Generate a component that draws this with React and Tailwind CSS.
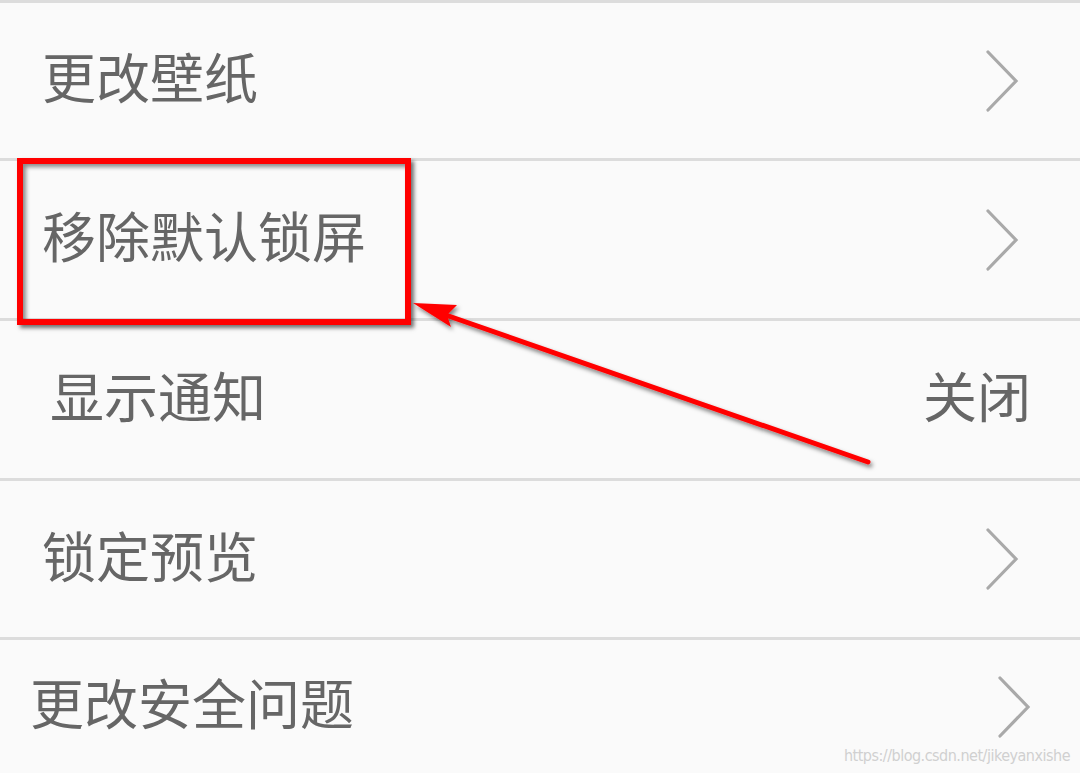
import React from "react";

const rows = [
  { label: "更改壁纸", h: "h-[158px]", pl: "pl-[42px]", pr: "pr-[61px]", arrow: true },
  { label: "移除默认锁屏", h: "h-[160px]", pl: "pl-[42px]", pr: "pr-[61px]", arrow: true },
  { label: "显示通知", h: "h-[160px]", pl: "pl-[50px]", pr: "pr-[49px]", value: "关闭" },
  { label: "锁定预览", h: "h-[159px]", pl: "pl-[42px]", pr: "pr-[61px]", arrow: true },
  { label: "更改安全问题", h: "h-[136px]", pl: "pl-[30px]", pr: "pr-[49px]", arrow: true },
];

function Chevron() {
  return (
    <svg width="34" height="64" viewBox="0 0 34 64" fill="none">
      <polyline
        points="3,3 31,32 3,61"
        stroke="#a9a9a9"
        strokeWidth="3.2"
        strokeLinecap="round"
        strokeLinejoin="miter"
      />
    </svg>
  );
}

export default function App() {
  return (
    <div
      className="relative w-[1080px] h-[773px] overflow-hidden bg-[#fafafa]"
      style={{ fontFamily: '"Noto Sans CJK SC", "Noto Sans", sans-serif' }}
    >
      <div className="flex flex-col">
        {rows.map((row) => (
          <div
            key={row.label}
            className={`flex items-center justify-between border-t-[3px] border-[#dcdcdc] ${row.h} ${row.pl} ${row.pr}`}
          >
            <span className="mb-[9px] text-[54px] leading-none text-[#666666]">
              {row.label}
            </span>
            {row.arrow && <Chevron />}
            {row.value && (
              <span className="mb-[9px] text-[54px] leading-none text-[#666666]">
                {row.value}
              </span>
            )}
          </div>
        ))}
      </div>

      {/* annotation: red box */}
      <div className="absolute left-[17px] top-[158px] w-[394px] h-[167px] border-[6px] border-[#ff0000] shadow-[3px_3px_4px_rgba(0,0,0,0.55),inset_3px_3px_4px_rgba(0,0,0,0.45)]" />

      {/* annotation: arrow */}
      <svg
        className="absolute left-0 top-0"
        width="1080"
        height="773"
        viewBox="0 0 1080 773"
      >
        <defs>
          <filter id="sh" x="-10%" y="-10%" width="120%" height="130%">
            <feDropShadow dx="2" dy="3" stdDeviation="2" floodColor="#000" floodOpacity="0.5" />
          </filter>
        </defs>
        <g filter="url(#sh)">
          <line x1="868" y1="462" x2="440" y2="313" stroke="#ff0000" strokeWidth="5" strokeLinecap="round" />
          <polygon points="413,303 457,305 447,315 451,327" fill="#ff0000" />
        </g>
      </svg>

      <div
        className="absolute right-[10px] bottom-[9px] text-[16px] leading-none text-[#d0d0d0] tracking-[-0.5px]"
        style={{ fontFamily: '"Liberation Sans Narrow", "DejaVu Sans Condensed", "Liberation Sans", sans-serif' }}
      >
        https://blog.csdn.net/jikeyanxishe
      </div>
    </div>
  );
}
